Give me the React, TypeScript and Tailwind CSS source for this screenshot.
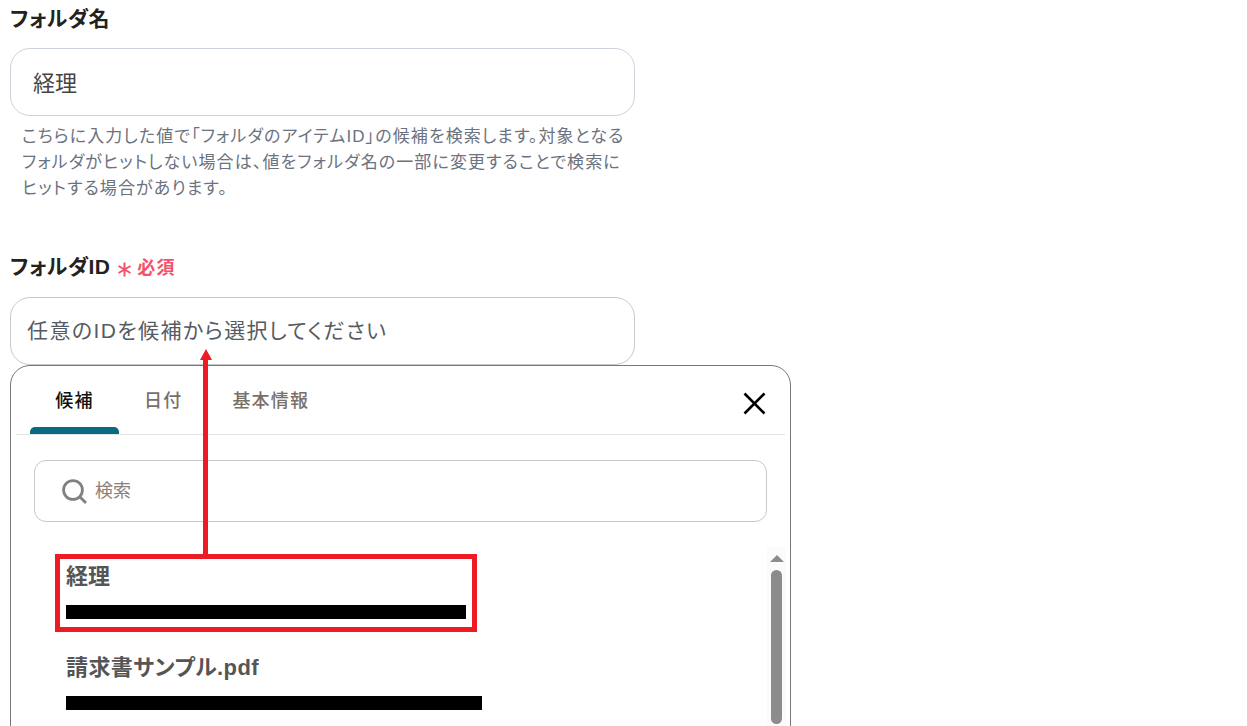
const font = { fontFamily: '"Liberation Sans", "Noto Sans CJK JP", sans-serif' };

export default function App() {
  return (
    <div className="relative h-[726px] w-[1247px] overflow-hidden bg-white [font-feature-settings:'palt']" style={font}>
      <div className="w-[781px] pl-[10px]">
        <div className="pt-[5px] text-[21px] leading-[28px] font-bold tracking-[0.4px] text-[#222]">フォルダ名</div>
        <div className="mt-[15px] flex h-[68px] w-[625px] items-center rounded-[20px] border border-[#cdd3dc] pt-[2px] pl-[22px] text-[22px] text-[#444]">
          経理
        </div>
        <p className="mt-[8px] pl-[12px] text-[17px] leading-[26px] tracking-[1.1px] whitespace-nowrap text-[#6b7280]">
          こちらに入力した値で「フォルダのアイテムID」の候補を検索します。対象となる
          <br />
          フォルダがヒットしない場合は、値をフォルダ名の一部に変更することで検索に
          <br />
          ヒットする場合があります。
        </p>

        <div className="mt-[51px] flex h-[28px] items-center">
          <span className="text-[21px] font-bold tracking-[0.4px] text-[#222]">フォルダID</span>
          <svg className="mt-[4px] ml-[7px]" width="15" height="15" viewBox="0 0 15 15" stroke="#f4516c" strokeWidth="2" fill="none">
            <path d="M7.5 0.5V14.5M1.5 4L13.5 11M13.5 4L1.5 11" />
          </svg>
          <span className="mt-[2px] ml-[5px] text-[18px] font-bold tracking-[1.2px] text-[#f4516c]">必須</span>
        </div>
        <div className="mt-[16px] flex h-[68px] w-[625px] items-center rounded-[20px] border border-[#c8c8c8] pl-[16px] text-[21px] tracking-[1.4px] text-[#555b63]">
          任意のIDを候補から選択してください
        </div>

        <div className="h-[400px] w-[781px] rounded-t-[20px] border border-[#777] bg-white">
          <div className="mx-[5px] flex h-[69px] items-start border-b border-[#e5e5e5]">
            <div className="relative ml-[14px] h-[68px] w-[89px] pt-[22px] text-center text-[18px] leading-[27px] font-medium tracking-[1.3px] text-[#111]">
              候補
              <div className="absolute right-0 bottom-0 left-0 h-[7px] rounded-t-[5px] bg-[#0a6a82]" />
            </div>
            <div className="ml-[25px] pt-[22px] text-[18px] leading-[27px] font-medium tracking-[1.2px] text-[#7a7068]">日付</div>
            <div className="ml-[50px] pt-[22px] text-[18px] leading-[27px] font-medium tracking-[1.2px] text-[#7a7068]">基本情報</div>
            <svg className="mt-[26px] mr-[19px] ml-auto" width="23" height="23" viewBox="0 0 23 23" stroke="#000" strokeWidth="2.6" fill="none">
              <path d="M1.5 1.5L21.5 21.5M21.5 1.5L1.5 21.5" />
            </svg>
          </div>

          <div className="mt-[25px] ml-[23px] flex h-[62px] w-[733px] items-center rounded-[12px] border border-[#c8c8c8] pl-[27px]">
            <svg width="25" height="25" viewBox="0 0 25 25" stroke="#808080" strokeWidth="2.8" fill="none">
              <circle cx="11" cy="11" r="9.4" />
              <path d="M17.5 17.5L24 24" />
            </svg>
            <span className="mt-[1px] ml-[8px] text-[18px] text-[#8a8078]">検索</span>
          </div>

          <div className="mt-[25px] flex">
            <div className="w-[756px] pt-[15px] pl-[55px]">
              <div className="text-[22px] leading-[30px] font-bold text-[#555]">経理</div>
              <div className="mt-[13px] h-[14px] w-[400px] bg-black" />
              <div className="mt-[34px] text-[22px] leading-[30px] font-bold tracking-[0.4px] text-[#555]">請求書サンプル.pdf</div>
              <div className="mt-[13px] h-[14px] w-[416px] bg-black" />
            </div>
            <div className="flex h-[179px] w-[19px] flex-col items-center bg-[#fbfbfb]">
              <div className="mt-[8px] h-0 w-0 border-x-[7px] border-b-[7px] border-x-transparent border-b-[#8c8c8c]" />
              <div className="mt-[8px] h-[154px] w-[11px] rounded-full bg-[#8c8c8c]" />
            </div>
          </div>
        </div>
      </div>

      {/* annotation */}
      <div className="absolute top-[554px] left-[55px] h-[78px] w-[422px] border-[5px] border-[#ed1c24]" />
      <div className="absolute top-[359px] left-[203px] h-[195px] w-[4.5px] bg-[#ed1c24]" />
      <div className="absolute top-[349px] left-[200px] h-0 w-0 border-x-[6px] border-b-[11px] border-x-transparent border-b-[#ed1c24]" />
    </div>
  );
}
